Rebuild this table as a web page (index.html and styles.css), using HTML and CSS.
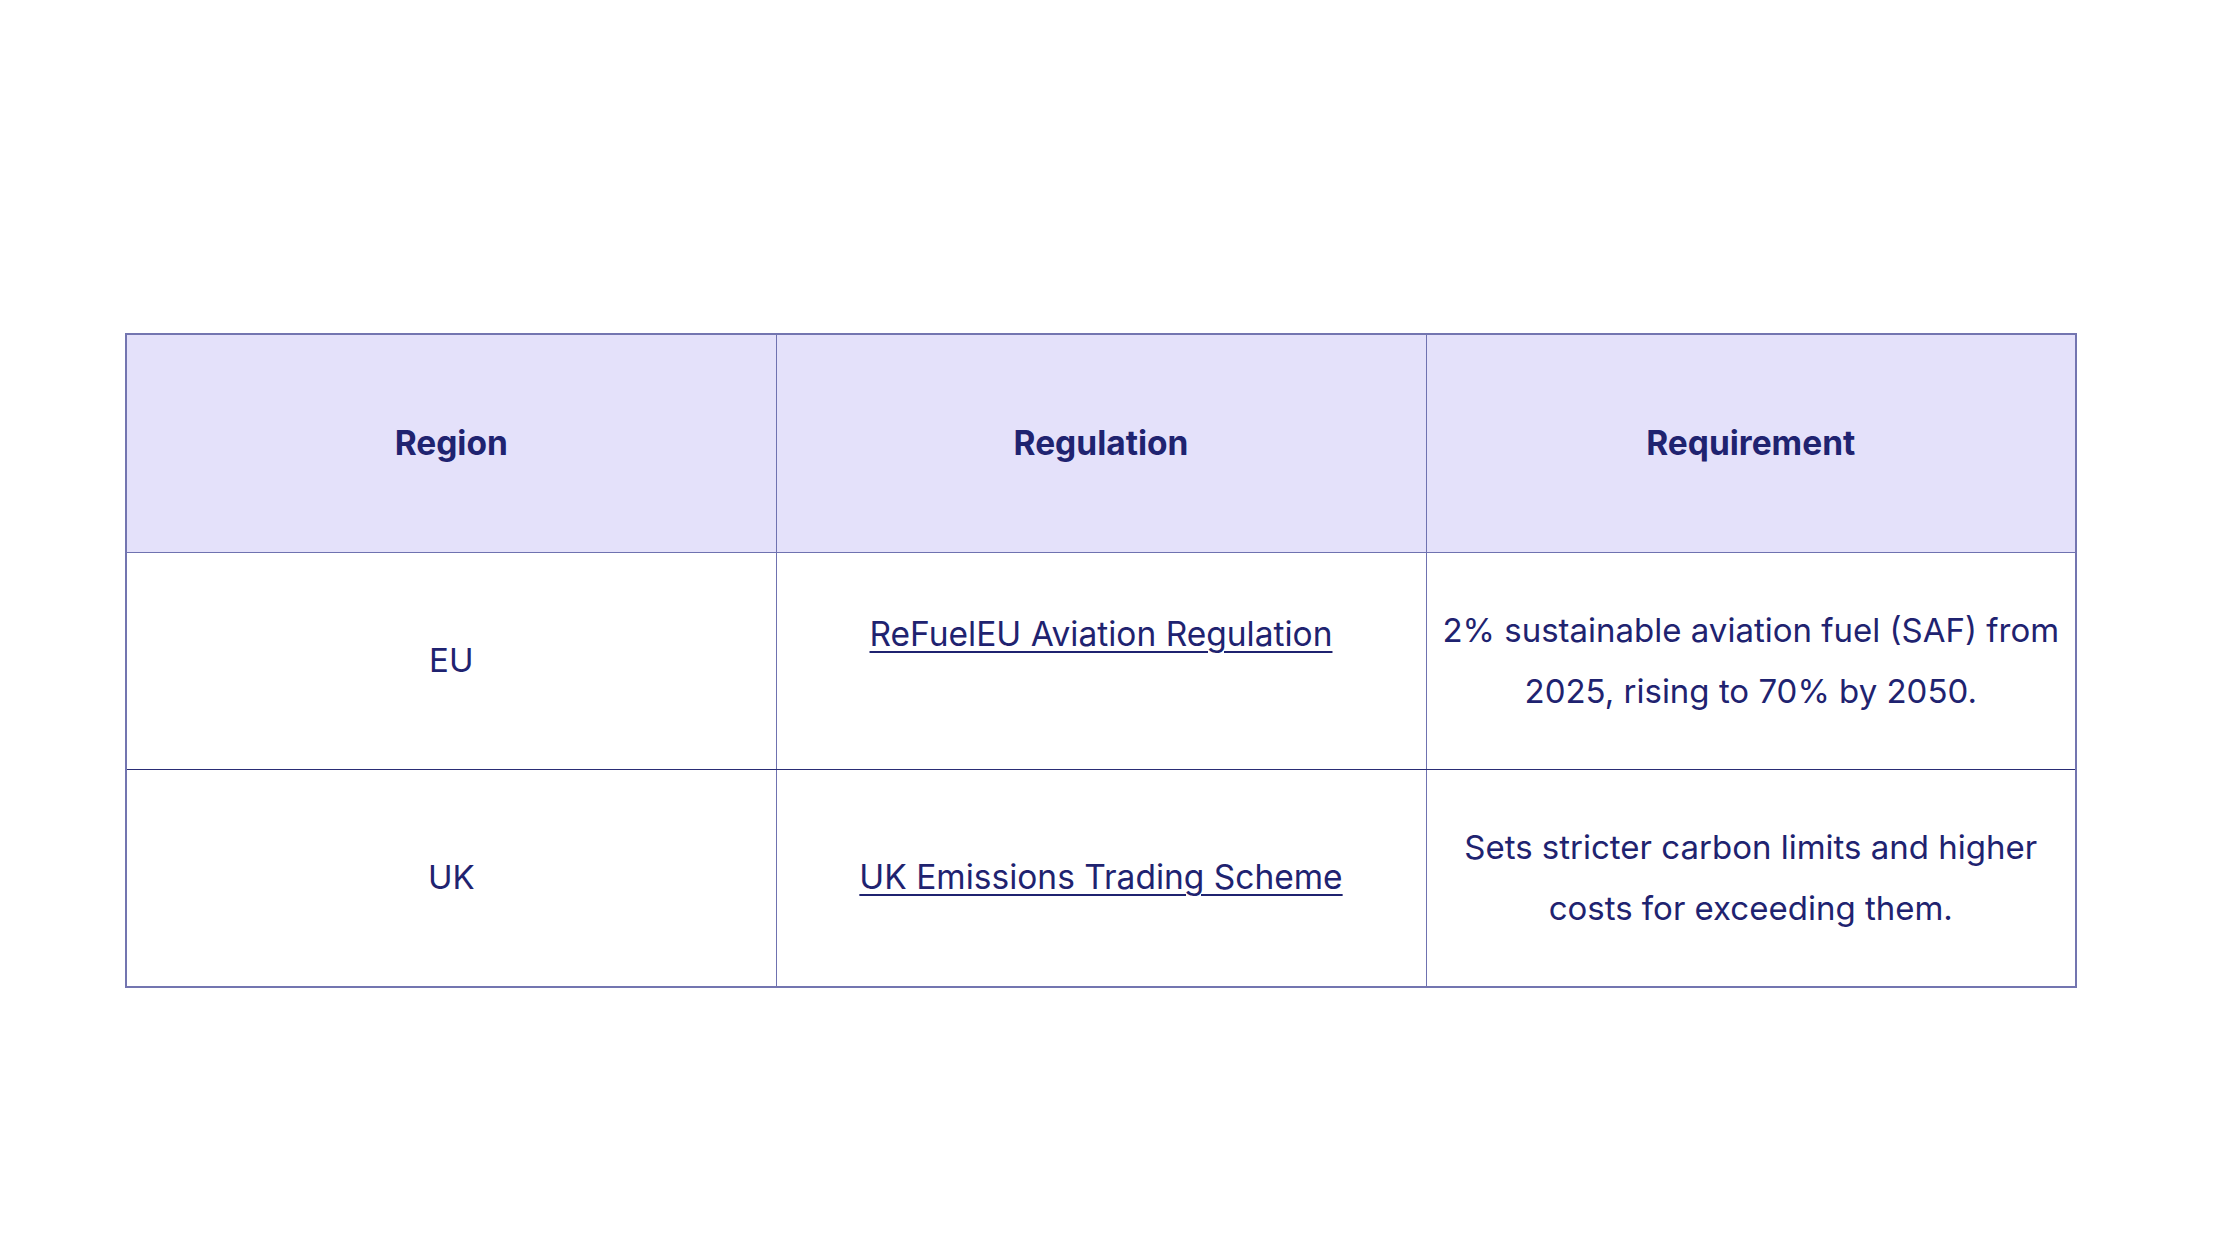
FILE: index.html
```html
<!DOCTYPE html>
<html lang="en">
<head>
<meta charset="utf-8">
<title>SAF regulations</title>
<link rel="stylesheet" href="styles.css">
</head>
<body>
<main class="page">
  <table class="reg-table">
    <thead>
      <tr>
        <th>Region</th>
        <th>Regulation</th>
        <th>Requirement</th>
      </tr>
    </thead>
    <tbody>
      <tr>
        <td>EU</td>
        <td><a class="link link-raised" href="#">ReFuelEU Aviation Regulation</a></td>
        <td>2% sustainable aviation fuel (SAF) from 2025, rising to 70% by 2050.</td>
      </tr>
      <tr>
        <td>UK</td>
        <td><a class="link" href="#">UK Emissions Trading Scheme</a></td>
        <td>Sets stricter carbon limits and higher costs for exceeding them.</td>
      </tr>
    </tbody>
  </table>
</main>
</body>
</html>
```
FILE: styles.css
```css
html, body {
  margin: 0;
  padding: 0;
  background: #ffffff;
}

.page {
  width: 2240px;
  height: 1260px;
  padding: 333px 0 0 125px;
  box-sizing: border-box;
}

.reg-table {
  width: 1952px;
  table-layout: fixed;
  border-collapse: collapse;
  font-family: Inter, "Noto Sans", sans-serif;
  font-size: 33px;
  line-height: 61px;
  color: #1f2370;
  border: 2px solid #7375b0;
}

.reg-table th,
.reg-table td {
  height: 218px;
  border: 1px solid #6f72b0;
  text-align: center;
  vertical-align: middle;
  padding: 0 12px;
  box-sizing: border-box;
}

.reg-table th {
  background: #e4e1fa;
  font-weight: 700;
  font-size: 33.5px;
}

.reg-table td {
  font-weight: 400;
}

.reg-table tbody tr:first-child td {
  height: 217px;
  border-bottom: 1px solid #2a2d75;
}

.link {
  color: #1f2370;
  font-size: 33.5px;
  text-decoration: underline;
  text-decoration-thickness: 2px;
  text-underline-offset: 5px;
}

.link-raised {
  display: inline-block;
  margin-bottom: 52px;
}
```
